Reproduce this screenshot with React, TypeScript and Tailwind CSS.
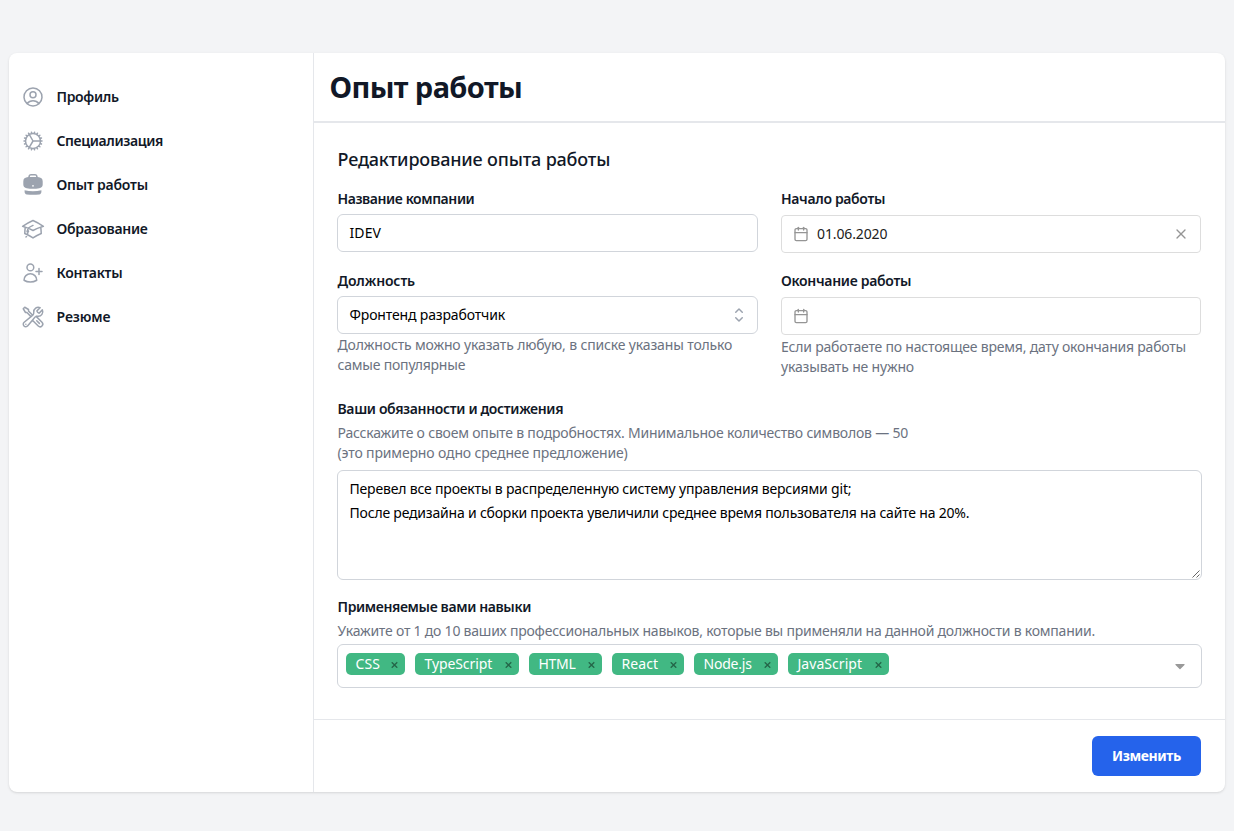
import type { ReactNode } from "react";
import {
  HiOutlineUserCircle,
  HiOutlineCog,
  HiOutlineAcademicCap,
  HiOutlineUserPlus,
  HiOutlineWrenchScrewdriver,
  HiMiniChevronUpDown,
} from "react-icons/hi2";

function BriefcaseIcon({ className }: { className?: string }) {
  return (
    <svg viewBox="0 0 24 24" className={className} fill="currentColor">
      <path
        fillRule="evenodd"
        clipRule="evenodd"
        d="M7.3 4.1V3.8C7.3 2.2 8.5 1 10.1 1h3.8c1.6 0 2.8 1.2 2.8 2.8v.3c3.4.3 5 1.5 5 4.4v2.9c0 2.2-1.3 3.4-3.4 3.8-4.1.8-8.500.8-12.600 0C3.600 14.800 2.300 13.600 2.300 11.400V8.500c0-2.900 1.600-4.100 5-4.400zM8.900 4h6.200v-.2c0-.7-.5-1.200-1.200-1.200h-3.800c-.7 0-1.200.5-1.200 1.200V4zM12 12a.8.8 0 1 0 0 1.700.8.8 0 0 0 0-1.700z"
      />
      <path d="M3.600 17.200c5.400 1.300 11.400 1.300 16.800 0v1.500c0 1.500-.8 2.500-2.200 2.700-4.100.6-8.300.6-12.400 0-1.400-.2-2.200-1.200-2.200-2.700v-1.500z" />
    </svg>
  );
}

const nav = [
  { label: "Профиль", icon: HiOutlineUserCircle, spacing: "tracking-[-0.32px]" },
  { label: "Специализация", icon: HiOutlineCog, spacing: "tracking-[-0.38px]" },
  { label: "Опыт работы", icon: BriefcaseIcon, spacing: "tracking-[-0.22px]" },
  { label: "Образование", icon: HiOutlineAcademicCap, spacing: "tracking-[-0.3px]" },
  { label: "Контакты", icon: HiOutlineUserPlus, spacing: "tracking-[-0.28px]" },
  { label: "Резюме", icon: HiOutlineWrenchScrewdriver, spacing: "tracking-[-0.1px]" },
];

const skills = [
  { name: "CSS", size: "w-[59px]", spacing: "tracking-[0.1px]" },
  { name: "TypeScript", size: "w-[104px]", spacing: "tracking-[-0.1px]" },
  { name: "HTML", size: "w-[73px]", spacing: "tracking-[-0.3px]" },
  { name: "React", size: "w-[72px]", spacing: "tracking-[0.1px]" },
  { name: "Node.js", size: "w-[84px]", spacing: "tracking-[-0.2px]" },
  { name: "JavaScript", size: "w-[101px]", spacing: "tracking-[0.05px]" },
];

function Label({ children, className }: { children: ReactNode; className: string }) {
  return <div className={`text-sm leading-5 font-semibold text-[#111827] ${className}`}>{children}</div>;
}

function CalendarIcon() {
  return (
    <svg viewBox="0 0 32 32" className="size-4 shrink-0 fill-[#959595]">
      <path d="M29.333 8c0-2.208-1.792-4-4-4h-18.667c-2.208 0-4 1.792-4 4v18.667c0 2.208 1.792 4 4 4h18.667c2.208 0 4-1.792 4-4v-18.667zM26.667 8v18.667c0 0.736-0.597 1.333-1.333 1.333 0 0-18.667 0-18.667 0-0.736 0-1.333-0.597-1.333-1.333 0 0 0-18.667 0-18.667 0-0.736 0.597-1.333 1.333-1.333 0 0 18.667 0 18.667 0 0.736 0 1.333 0.597 1.333 1.333z" />
      <path d="M20 2.667v5.333c0 0.736 0.597 1.333 1.333 1.333s1.333-0.597 1.333-1.333v-5.333c0-0.736-0.597-1.333-1.333-1.333s-1.333 0.597-1.333 1.333z" />
      <path d="M9.333 2.667v5.333c0 0.736 0.597 1.333 1.333 1.333s1.333-0.597 1.333-1.333v-5.333c0-0.736-0.597-1.333-1.333-1.333s-1.333 0.597-1.333 1.333z" />
      <path d="M4 14.667h24c0.736 0 1.333-0.597 1.333-1.333s-0.597-1.333-1.333-1.333h-24c-0.736 0-1.333 0.597-1.333 1.333s0.597 1.333 1.333 1.333z" />
    </svg>
  );
}

function ClearIcon() {
  return (
    <svg viewBox="0 0 32 32" className="size-4 shrink-0 fill-[#959595]">
      <path d="M23.057 7.057l-16 16c-0.52 0.52-0.52 1.365 0 1.885s1.365 0.52 1.885 0l16-16c0.52-0.52 0.52-1.365 0-1.885s-1.365-0.52-1.885 0z" />
      <path d="M7.057 8.943l16 16c0.52 0.52 1.365 0.52 1.885 0s0.52-1.365 0-1.885l-16-16c-0.52-0.52-1.365-0.52-1.885 0s-0.52 1.365 0 1.885z" />
    </svg>
  );
}

function DateField({ value }: { value?: string }) {
  return (
    <div className="mt-[6px] flex h-[38px] w-[420px] items-center rounded-[4px] border border-[#ddd] px-[11px]">
      <CalendarIcon />
      <span className="ml-2 flex-1 text-sm tracking-[-0.12px] text-[#212121]">{value}</span>
      {value && <ClearIcon />}
    </div>
  );
}

export default function App() {
  return (
    <div className="flex min-h-[831px] w-full items-start bg-[#f3f4f6] px-[9px] pt-[53px] font-['Noto_Sans',sans-serif]">
      <div className="flex h-[739px] w-full overflow-hidden rounded-lg bg-white shadow">
        <aside className="w-[305px] shrink-0 border-r border-[#e5e7eb] pt-[22px] pl-3">
          <nav className="flex flex-col">
            {nav.map(({ label, icon: Icon, spacing }) => (
              <a key={label} className="flex h-11 items-center gap-[11.5px] text-sm font-semibold text-[#111827]">
                <Icon className="size-6 text-[#9ca3af]" />
                <span className={spacing}>{label}</span>
              </a>
            ))}
          </nav>
        </aside>

        <main className="flex min-w-0 flex-1 flex-col">
          <header className="flex h-[70px] shrink-0 items-center border-b-2 border-[#e5e7eb] pl-[15.5px]">
            <h1 className="text-[29px] leading-9 font-bold tracking-[-0.6px] text-[#111827]">Опыт работы</h1>
          </header>

          <div className="flex-1 pt-6 pl-[23px]">
            <h2 className="ml-[0.5px] text-lg leading-6 font-medium tracking-[-0.17px] text-[#111827]">
              Редактирование опыта работы
            </h2>
            <div className="mt-[18px] grid w-[865px] grid-cols-[421px_421px] gap-x-[23px]">
              <div className="h-[82px]">
                <Label className="pl-[0.5px] tracking-[-0.42px]">Название компании</Label>
                <div className="mt-[5px] flex h-[38px] items-center rounded-md border border-[#d1d5db] px-[11.5px] text-sm tracking-[0.1px]">
                  IDEV
                </div>
              </div>
              <div>
                <Label className="tracking-[-0.34px]">Начало работы</Label>
                <DateField value="01.06.2020" />
              </div>
              <div>
                <Label className="pl-[0.5px] tracking-[-0.15px]">Должность</Label>
                <div className="mt-[5px] flex h-[38px] items-center justify-between rounded-md border border-[#d1d5db] pr-2 pl-[11.5px] text-sm">
                  <span className="tracking-[-0.15px]">Фронтенд разработчик</span>
                  <HiMiniChevronUpDown className="size-5 text-[#9ca3af]" />
                </div>
                <p className="mt-px pl-[0.5px] text-sm leading-5 text-[#6b7280]">
                  <span className="block tracking-[-0.15px]">Должность можно указать любую, в списке указаны только</span>
                  <span className="block tracking-[-0.2px]">самые популярные</span>
                </p>
              </div>
              <div>
                <Label className="tracking-[-0.3px]">Окончание работы</Label>
                <DateField />
                <p className="mt-[2px] text-sm leading-5 text-[#6b7280]">
                  <span className="block tracking-[-0.21px]">Если работаете по настоящее время, дату окончания работы</span>
                  <span className="block tracking-[-0.17px]">указывать не нужно</span>
                </p>
              </div>
            </div>

            <div className="mt-[22px] w-[865px]">
              <Label className="pl-[0.5px] tracking-[-0.36px]">Ваши обязанности и достижения</Label>
              <p className="mt-1 pl-[0.5px] text-sm leading-5 text-[#6b7280]">
                <span className="block tracking-[-0.195px]">
                  Расскажите о своем опыте в подробностях. Минимальное количество символов — 50
                </span>
                <span className="block tracking-[-0.145px]">(это примерно одно среднее предложение)</span>
              </p>
              <div className="relative mt-[7px] h-[110px] rounded-md border border-[#d1d5db] px-[11.5px] py-[6px] text-sm leading-6">
                <span className="block tracking-[-0.18px]">
                  Перевел все проекты в распределенную систему управления версиями git;
                </span>
                <span className="block tracking-[-0.2px]">
                  После редизайна и сборки проекта увеличили среднее время пользователя на сайте на 20%.
                </span>
                <svg viewBox="0 0 8 8" className="absolute right-px bottom-px size-2 stroke-[#555]" fill="none">
                  <path d="M.5 7.5l7-7M4.5 7.5l3-3" strokeWidth="0.9" />
                </svg>
              </div>
            </div>

            <div className="mt-[17px] w-[865px]">
              <Label className="pl-[0.5px] tracking-[-0.37px]">Применяемые вами навыки</Label>
              <p className="mt-1 pl-[0.5px] text-sm leading-5 tracking-[-0.22px] text-[#6b7280]">
                Укажите от 1 до 10 ваших профессиональных навыков, которые вы применяли на данной должности в компании.
              </p>
              <div className="mt-[3px] flex h-11 items-center justify-between rounded-md border border-[#d1d5db] pr-4 pl-2">
                <div className="mb-1 flex gap-[10px]">
                  {skills.map((s) => (
                    <span
                      key={s.name}
                      className={`flex h-[22px] items-center justify-between rounded-[5px] bg-[#41b883] pr-[7.5px] pl-[9.5px] text-sm text-white ${s.size}`}
                    >
                      <span className={s.spacing}>{s.name}</span>
                      <svg viewBox="0 0 320 512" className="mt-px h-[10px] w-[7px] fill-black/45">
                        <path d="M207.6 256l107.72-107.72c6.23-6.23 6.23-16.34 0-22.58l-25.03-25.03c-6.23-6.23-16.34-6.23-22.58 0L160 208.4 52.28 100.68c-6.23-6.23-16.34-6.23-22.58 0L4.68 125.7c-6.23 6.23-6.23 16.34 0 22.58L112.4 256 4.68 363.72c-6.23 6.23-6.23 16.34 0 22.58l25.03 25.03c6.23 6.23 16.34 6.23 22.58 0L160 303.6l107.72 107.72c6.23 6.23 16.34 6.23 22.58 0l25.03-25.03c6.23-6.23 6.23-16.34 0-22.58L207.6 256z" />
                      </svg>
                    </span>
                  ))}
                </div>
                <svg viewBox="0 0 320 512" className="h-4 w-[10px] fill-[#999]">
                  <path d="M31.3 192h257.3c17.8 0 26.7 21.5 14.1 34.1L174.1 354.8c-7.8 7.8-20.5 7.8-28.3 0L17.2 226.1C4.6 213.5 13.5 192 31.3 192z" />
                </svg>
              </div>
            </div>
          </div>

          <footer className="flex h-[73px] shrink-0 items-center justify-end border-t border-[#e5e7eb] pr-6">
            <button className="h-10 w-[109px] rounded-md bg-[#2563eb] text-sm font-bold tracking-[-0.42px] text-white">
              Изменить
            </button>
          </footer>
        </main>
      </div>
    </div>
  );
}
